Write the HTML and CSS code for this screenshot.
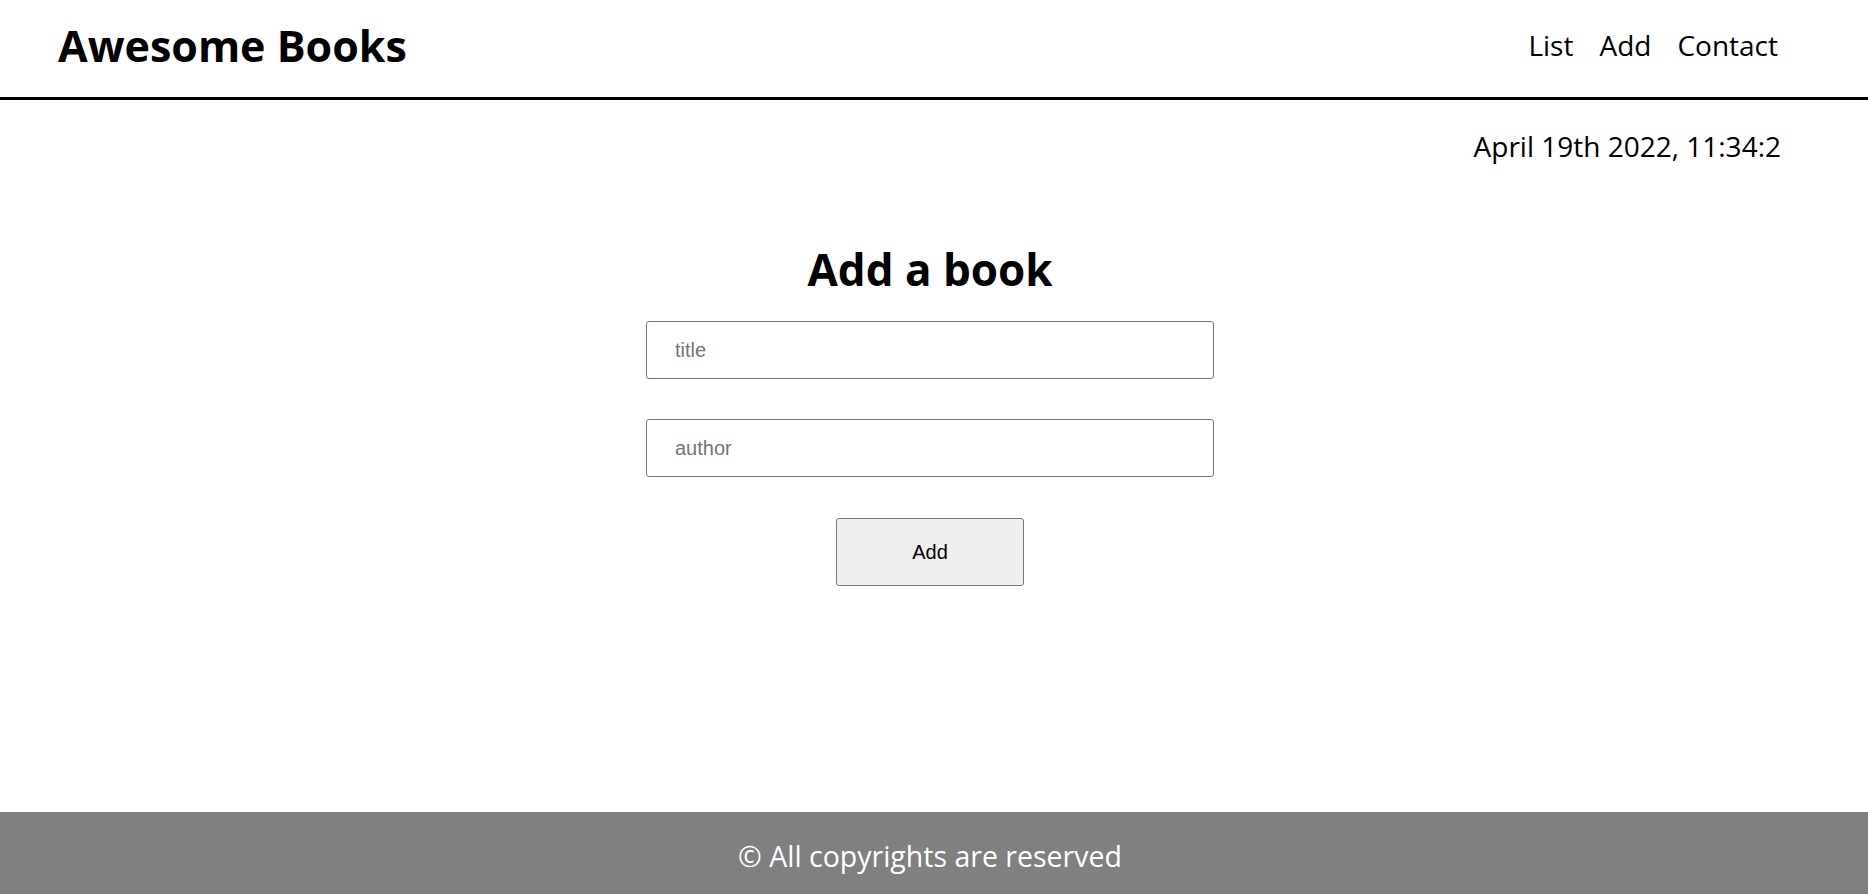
FILE: index.html
```html
<!DOCTYPE html>
<html lang="en">
<head>
<meta charset="utf-8">
<title>Awesome Books</title>
<link rel="stylesheet" href="styles.css">
</head>
<body>
<header class="site-header">
  <h1 class="logo">Awesome Books</h1>
  <nav class="nav">
    <a href="#" class="nav-link">List</a>
    <a href="#" class="nav-link">Add</a>
    <a href="#" class="nav-link">Contact</a>
  </nav>
</header>
<main class="main">
  <p class="date">April 19th 2022, 11:34:2</p>
  <section class="add-section">
    <h2 class="section-title">Add a book</h2>
    <form class="book-form">
      <input class="field" type="text" placeholder="title">
      <input class="field" type="text" placeholder="author">
      <button class="add-btn" type="button">Add</button>
    </form>
  </section>
</main>
<footer class="site-footer">
  <p class="footer-text">© All copyrights are reserved</p>
</footer>
</body>
</html>
```
FILE: styles.css
```css
* {
  box-sizing: border-box;
}

html, body {
  margin: 0;
  padding: 0;
}

body {
  min-height: 100vh;
  display: flex;
  flex-direction: column;
  font-family: "Open Sans", "Noto Sans", sans-serif;
  color: #000;
  background: #fff;
}

.site-header {
  height: 100px;
  display: flex;
  align-items: center;
  justify-content: space-between;
  padding: 0 90px 7px 58px;
  border-bottom: 3px solid #000;
}

.logo {
  margin: 0;
  font-size: 43px;
  line-height: 1;
  font-weight: 700;
}

.nav {
  display: flex;
  gap: 26px;
}

.nav-link {
  color: #000;
  text-decoration: none;
  font-size: 28px;
  line-height: 1;
}

.main {
  flex: 1;
  display: flex;
  flex-direction: column;
  padding-right: 8px;
}

.date {
  margin: 32px 79px 0 0;
  text-align: right;
  font-size: 28px;
  line-height: 1;
}

.add-section {
  display: flex;
  flex-direction: column;
  align-items: center;
  margin-top: 87px;
}

.section-title {
  margin: 0;
  font-size: 44px;
  line-height: 1;
  font-weight: 700;
}

.book-form {
  display: flex;
  flex-direction: column;
  align-items: center;
  gap: 40px;
  margin-top: 30px;
}

.field {
  width: 568px;
  height: 58px;
  padding: 0 28px;
  border: 1px solid #767676;
  border-radius: 3px;
  font-family: "Liberation Sans", Arial, sans-serif;
  font-size: 20px;
  color: #000;
  background: #fff;
}

.field::placeholder {
  color: #757575;
}

.add-btn {
  width: 188px;
  height: 68px;
  margin-top: 1px;
  border: 1px solid #767676;
  border-radius: 3px;
  background: #efefef;
  font-family: "Liberation Sans", Arial, sans-serif;
  font-size: 20px;
  color: #000;
}

.site-footer {
  height: 82px;
  background: #808080;
  display: flex;
  align-items: center;
  justify-content: center;
  padding: 6px 8px 0 0;
}

.footer-text {
  margin: 0;
  color: #fff;
  font-size: 28.5px;
  line-height: 1;
}
```
